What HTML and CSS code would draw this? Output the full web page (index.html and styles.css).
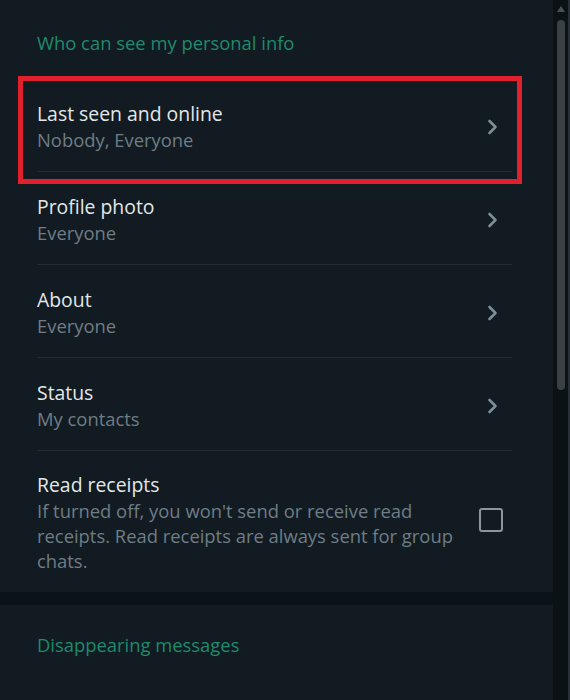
FILE: index.html
```html
<!DOCTYPE html>
<html>
<head>
<meta charset="utf-8">
<link rel="stylesheet" href="styles.css">
</head>
<body>
<div class="window">
  <div class="content">
    <section class="panel panel-first">
      <h2 class="section-title">Who can see my personal info</h2>
      <div class="row-list">
        <div class="highlight-wrap">
          <div class="row">
            <div class="row-text">
              <div class="row-title">Last seen and online</div>
              <div class="row-sub">Nobody, Everyone</div>
            </div>
            <svg class="chevron" viewBox="0 0 11 16"><path d="M2.5 2 L8.5 8 L2.5 14" /></svg>
          </div>
          <div class="highlight"></div>
        </div>
        <div class="row">
          <div class="row-text">
            <div class="row-title">Profile photo</div>
            <div class="row-sub">Everyone</div>
          </div>
          <svg class="chevron" viewBox="0 0 11 16"><path d="M2.5 2 L8.5 8 L2.5 14" /></svg>
        </div>
        <div class="row">
          <div class="row-text">
            <div class="row-title">About</div>
            <div class="row-sub">Everyone</div>
          </div>
          <svg class="chevron" viewBox="0 0 11 16"><path d="M2.5 2 L8.5 8 L2.5 14" /></svg>
        </div>
        <div class="row">
          <div class="row-text">
            <div class="row-title">Status</div>
            <div class="row-sub">My contacts</div>
          </div>
          <svg class="chevron" viewBox="0 0 11 16"><path d="M2.5 2 L8.5 8 L2.5 14" /></svg>
        </div>
        <div class="row row-last">
          <div class="row-text">
            <div class="row-title">Read receipts</div>
            <div class="row-desc">If turned off, you won't send or receive read receipts. Read receipts are always sent for group chats.</div>
          </div>
          <span class="checkbox"></span>
        </div>
      </div>
    </section>
    <div class="separator"></div>
    <section class="panel panel-second">
      <h2 class="section-title">Disappearing messages</h2>
    </section>
  </div>
  <div class="scrollbar">
    <svg class="scroll-arrow" viewBox="0 0 8 6"><path d="M4 0 L8 6 L0 6 Z" /></svg>
    <div class="scroll-thumb"></div>
  </div>
  <div class="edge"></div>
</div>
</body>
</html>
```

FILE: styles.css
```css
* { box-sizing: border-box; }
html, body {
  margin: 0;
  padding: 0;
  height: 100%;
  background: #0b1216;
  font-family: "Open Sans", "Noto Sans", sans-serif;
}
.window {
  display: flex;
  height: 700px;
  overflow: hidden;
}
.content {
  width: 553px;
  flex: none;
  display: flex;
  flex-direction: column;
  background: #0b141a;
}
.panel {
  background: #111b21;
}
.panel-first {
  padding-top: 31px;
  height: 592px;
}
.separator {
  height: 13px;
  background: #0b1318;
}
.panel-second {
  flex: 1;
  padding-top: 28px;
}
.section-title {
  margin: 0 0 24px 37px;
  font-size: 18.4px;
  line-height: 24px;
  font-weight: 400;
  color: #1f8a6c;
}
.row-list {
  display: flex;
  flex-direction: column;
}
.highlight-wrap {
  position: relative;
}
.highlight {
  position: absolute;
  left: 18px;
  top: -3px;
  width: 504px;
  height: 108px;
  border: 5px solid #e0202c;
  pointer-events: none;
}
.row {
  margin: 0 41px 0 37px;
  height: 93px;
  padding-top: 22px;
  display: flex;
  align-items: flex-start;
  border-bottom: 1px solid #222d34;
}
.row-text {
  flex: 1;
  min-width: 0;
}
.row-title {
  font-size: 19.4px;
  line-height: 26px;
  color: #e3e7e9;
}
.row-sub {
  font-size: 18.4px;
  line-height: 26px;
  color: #6f7d86;
}
.chevron {
  width: 11px;
  height: 16px;
  margin: 18px 14px 0 0;
  fill: none;
  stroke: #7f8d96;
  stroke-width: 2.6;
  stroke-linecap: round;
  stroke-linejoin: round;
}
.row-last {
  height: auto;
  border-bottom: none;
  padding-top: 21px;
  padding-bottom: 20px;
  align-items: center;
}
.row-desc {
  font-size: 18.4px;
  line-height: 25px;
  color: #6f7d86;
  max-width: 435px;
}
.checkbox {
  width: 24px;
  height: 24px;
  border: 2px solid #8a979f;
  border-radius: 3px;
  margin: 0 9px 0 0;
  flex: none;
  position: relative;
  top: -3px;
}
.scrollbar {
  width: 15px;
  flex: none;
  background: #0b1216;
  display: flex;
  flex-direction: column;
  align-items: center;
  padding-top: 6px;
}
.scroll-arrow {
  width: 8px;
  height: 6px;
  fill: #4a5156;
}
.scroll-thumb {
  margin-top: 8px;
  width: 8px;
  height: 370px;
  border-radius: 4px;
  background: #3a4044;
}
.edge {
  width: 2px;
  flex: none;
  background: #2a3136;
}
```
